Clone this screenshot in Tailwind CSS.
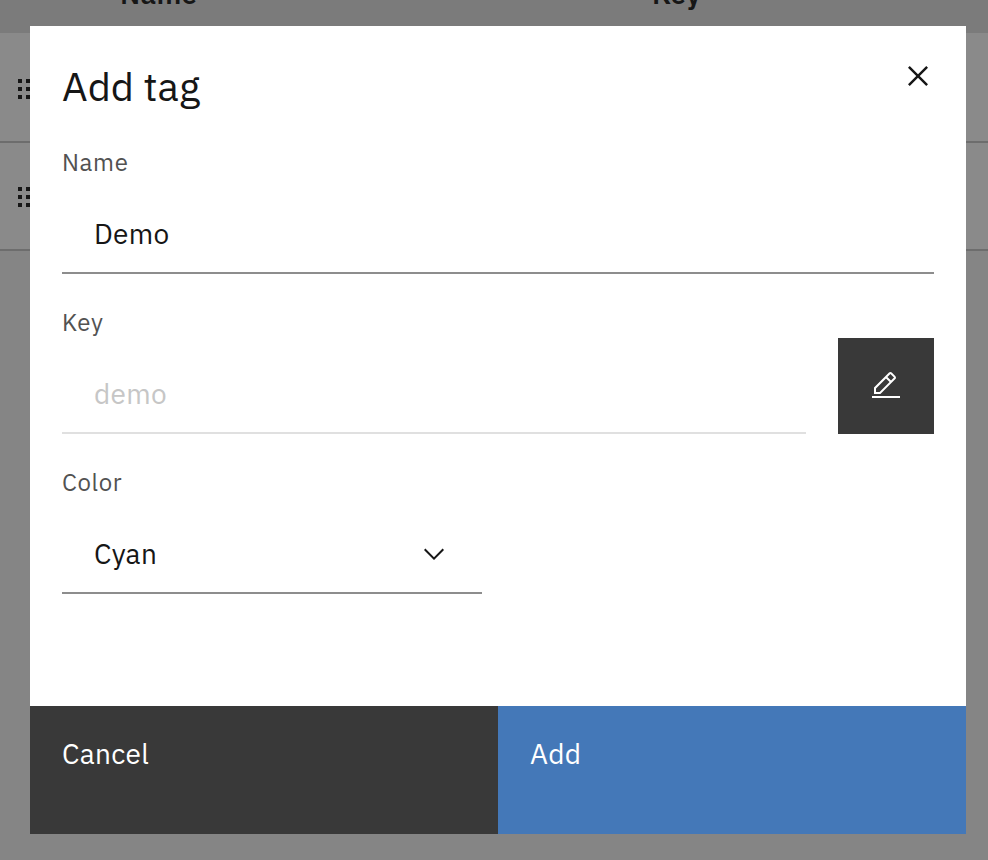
<!DOCTYPE html>
<html lang="en">
<head>
<meta charset="utf-8">
<title>Add tag</title>
<script src="https://cdn.jsdelivr.net/npm/@tailwindcss/browser@4"></script>
</head>
<body class="relative h-[860px] w-[988px] overflow-hidden bg-[#858585] font-['IBM_Plex_Sans',Roboto,sans-serif] text-[#161616] antialiased">
  <div>
    <div class="flex h-[33px] bg-[#7b7b7b] text-[28px] leading-[36px] font-semibold">
      <div class="-mt-[24px] ml-[120px] w-[532px] tracking-[0.32px]">Name</div>
      <div class="-mt-[24px] tracking-[0.32px]">Key</div>
    </div>
    <div class="h-[110px] border-b-2 border-[#6d6d6d] bg-[#8a8a8a] pt-[46px] pl-[18px]">
      <svg width="12" height="20" fill="#161616"><path d="M0 0h4v4H0zM8 0h4v4H8zM0 8h4v4H0zM8 8h4v4H8zM0 16h4v4H0zM8 16h4v4H8z"/></svg>
    </div>
    <div class="h-[108px] border-b-2 border-[#6d6d6d] bg-[#8a8a8a] pt-[44px] pl-[18px]">
      <svg width="12" height="20" fill="#161616"><path d="M0 0h4v4H0zM8 0h4v4H8zM0 8h4v4H0zM8 8h4v4H8zM0 16h4v4H0zM8 16h4v4H8z"/></svg>
    </div>
  </div>

  <div role="dialog" class="absolute top-[26px] left-[30px] flex h-[808px] w-[936px] flex-col bg-white">
    <div class="flex h-[120px] justify-between pr-[28px] pl-8">
      <h1 class="pt-[34px] text-[40px] leading-[52px] font-normal">Add tag</h1>
      <button class="mt-[30px] size-10"><svg width="40" height="40" viewBox="0 0 32 32" fill="#161616"><path d="M24 9.4L22.6 8 16 14.6 9.4 8 8 9.4 14.6 16 8 22.6 9.4 24 16 17.4 22.6 24 24 22.6 17.4 16 24 9.4z"/></svg></button>
    </div>
    <div class="flex flex-1 flex-col px-8">
      <div class="h-[160px]">
        <div class="h-8 text-2xl leading-8 tracking-[0.64px] text-[#525252]">Name</div>
        <div class="h-24 border-b-2 border-[#8d8d8d] pt-[38px] pl-8 text-[28px] leading-9 tracking-[0.32px]">Demo</div>
      </div>
      <div class="flex h-[160px] gap-8">
        <div class="flex-1">
          <div class="h-8 text-2xl leading-8 tracking-[0.64px] text-[#525252]">Key</div>
          <div class="h-24 border-b-2 border-[#e0e0e0] pt-[38px] pl-8 text-[28px] leading-9 tracking-[0.32px] text-[#c6c6c6]">demo</div>
        </div>
        <button class="mt-8 flex size-24 items-center justify-center bg-[#393939]"><svg width="32" height="32" viewBox="0 0 32 32" fill="#fff"><path d="M2 26h28v2H2zM25.4 9c.8-.8.8-2 0-2.8l-3.6-3.6c-.8-.8-2-.8-2.8 0l-15 15V24h6.4l15-15zm-5-5L24 7.6l-3 3L17.4 7l3-3zM6 22v-3.6l10-10 3.6 3.6-10 10H6z"/></svg></button>
      </div>
      <div class="w-[420px]">
        <div class="h-8 text-2xl leading-8 tracking-[0.64px] text-[#525252]">Color</div>
        <div class="flex h-24 justify-between border-b-2 border-[#8d8d8d] pr-8 pl-8 pt-[38px] text-[28px] leading-9 tracking-[0.32px]">Cyan<svg class="mt-0.5" width="32" height="32" viewBox="0 0 16 16" fill="#161616"><path d="M8 11L3 6l.7-.7L8 9.6l4.3-4.3.7.7z"/></svg></div>
      </div>
    </div>
    <div class="grid h-32 grid-cols-2 text-[28px] leading-9 tracking-[0.32px] text-white">
      <button class="flex items-start bg-[#393939] pt-[30px] pl-8">Cancel</button>
      <button class="flex items-start bg-[#4478b8] pt-[30px] pl-8">Add</button>
    </div>
  </div>
</body>
</html>
